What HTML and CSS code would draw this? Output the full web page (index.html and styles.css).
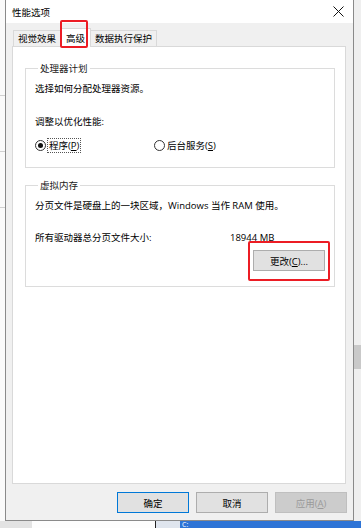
FILE: index.html
```html
<!DOCTYPE html>
<html lang="zh-CN">
<head>
  <meta charset="UTF-8">
  <title>性能选项</title>
  <link rel="stylesheet" href="styles.css">
</head>
<body>

<div class="screen">
  <div class="screen-row">
    <div class="side side-left">
      <span class="side-line"></span>
      <span class="side-line"></span>
      <span class="side-line"></span>
    </div>

    <div class="dialog">
      <div class="titlebar">
        <span class="title">性能选项</span>
        <svg class="close" width="11" height="11" viewBox="0 0 11 11">
          <path d="M0.5 0.5 L10.5 10.5 M10.5 0.5 L0.5 10.5" stroke="#111" stroke-width="1" fill="none"/>
        </svg>
      </div>

      <div class="dialog-body">
        <div class="tabs">
          <div class="tab">视觉效果</div>
          <div class="tab active">高级<span class="mark mark-tab"></span></div>
          <div class="tab">数据执行保护</div>
        </div>

        <div class="panel">
          <fieldset class="group">
            <legend>处理器计划</legend>
            <p class="line first">选择如何分配处理器资源。</p>
            <p class="line gap">调整以优化性能:</p>
            <div class="radio-row">
              <label class="radio">
                <span class="dot checked"></span>
                <span class="focus">程序(<u>P</u>)</span>
              </label>
              <label class="radio radio-second">
                <span class="dot"></span>
                <span>后台服务(<u>S</u>)</span>
              </label>
            </div>
          </fieldset>

          <fieldset class="group group-memory">
            <legend>虚拟内存</legend>
            <p class="line first">分页文件是硬盘上的一块区域，Windows 当作 RAM 使用。</p>
            <div class="line size-row">
              <span class="size-label">所有驱动器总分页文件大小:</span>
              <span>18944 MB</span>
            </div>
            <div class="change-row">
              <button class="btn btn-change">更改(<u>C</u>)...<span class="mark mark-btn"></span></button>
            </div>
          </fieldset>
        </div>

        <div class="buttons">
          <button class="btn default">确定</button>
          <button class="btn">取消</button>
          <button class="btn disabled">应用(<u>A</u>)</button>
        </div>
      </div>
    </div>

    <div class="side side-right">
      <span class="side-block"></span>
    </div>
  </div>

  <div class="screen-bottom">
    <span class="bottom-gray"></span>
    <span class="bottom-white"></span>
    <span class="bottom-edge"></span>
    <span class="bottom-blue">C:</span>
  </div>
</div>

</body>
</html>
```

FILE: styles.css
```css
* { margin: 0; padding: 0; box-sizing: border-box; }

body {
  width: 361px;
  height: 528px;
  overflow: hidden;
  background: #f2f2f2;
  font-family: "Open Sans", "Noto Sans CJK SC", sans-serif;
  font-size: 9.5px;
  color: #000;
}

.screen { display: flex; flex-direction: column; height: 528px; }
.screen-row { display: flex; height: 521px; }

/* background windows peeking out */
.side { flex: none; display: flex; flex-direction: column; }
.side-left { width: 5px; background: #fafafa; padding-top: 95px; gap: 55px; }
.side-line { display: block; height: 1px; background: #d0d0d0; }
.side-right { width: 7px; background: #efefef; padding-top: 345px; }
.side-block { display: block; height: 24px; background: #c9c9c9; }

.screen-bottom { display: flex; height: 7px; }
.bottom-gray { width: 32px; background: #e3e3e3; }
.bottom-white { width: 123px; background: #fdfdfd; }
.bottom-edge { width: 25px; background: #dfe5ee; border-left: 1px solid #222; }
.bottom-blue { flex: 1; background: #2e74d6; color: #fff; font-size: 7px; line-height: 7px; padding-left: 2px; }

/* dialog */
.dialog {
  width: 349px;
  display: flex;
  flex-direction: column;
  border: 1px solid #8a8a8a;
  border-top: none;
  background: #f0f0f0;
}

.titlebar {
  height: 25px;
  background: #fff;
  display: flex;
  align-items: center;
  justify-content: space-between;
  padding: 0 9px 0 6px;
}
.close { display: block; }

.dialog-body { flex: 1; display: flex; flex-direction: column; padding: 0 7px 7px 6px; }

.tabs { display: flex; align-items: flex-end; height: 23px; position: relative; z-index: 1; padding-left: 1px; }
.tab {
  height: 16px;
  line-height: 15px;
  padding: 0 4px;
  border: 1px solid #d9d9d9;
  border-bottom: none;
  background: #f0f0f0;
  margin-right: -1px;
}
.tab.active {
  position: relative;
  height: 19px;
  line-height: 19px;
  background: #fff;
  margin-bottom: -1px;
  padding: 0 5px;
}

.mark {
  position: absolute;
  border: 2px solid #ec1c24;
  border-radius: 2px;
}
.mark-tab { left: -1px; top: -9px; width: 28px; height: 28px; }
.mark-btn { left: -6px; top: -10px; right: -6px; bottom: -11px; }

.panel {
  height: 438px;
  background: #fff;
  border: 1px solid #d9d9d9;
  padding: 15px 10px 0 12px;
}

.group {
  border: 1px solid #dcdcdc;
  padding: 0 9px 15px 9px;
}
.group legend { margin-left: 3px; padding: 0 2px; line-height: 13px; color: #1a1a1a; }
.group-memory { margin-top: 11px; padding-bottom: 15px; }

.line { line-height: 13px; }
.line.first { margin-top: 7px; }
.line.gap { margin-top: 20px; }

.radio-row { display: flex; margin-top: 11px; line-height: 13px; }
.radio { display: flex; align-items: center; gap: 2px; width: 119px; }
.dot {
  width: 11px;
  height: 11px;
  border: 1px solid #333;
  border-radius: 50%;
  display: flex;
  align-items: center;
  justify-content: center;
  background: #fff;
}
.dot.checked::after {
  content: "";
  width: 5px;
  height: 5px;
  border-radius: 50%;
  background: #111;
}
.focus { outline: 1px dotted #555; padding: 0 1px; }

.size-row { display: flex; margin-top: 19px; }
.size-label { width: 195px; }

.change-row { display: flex; justify-content: flex-end; margin-top: 6px; }

.btn {
  position: relative;
  width: 72px;
  height: 21px;
  border: 1px solid #adadad;
  background: #e1e1e1;
  font-family: inherit;
  font-size: 9.5px;
  color: #000;
}
.btn.default { border-color: #0078d7; }
.btn.disabled { background: #cccccc; border-color: #bfbfbf; color: #9a9a9a; }

.buttons { display: flex; justify-content: flex-end; gap: 7px; margin-top: 8px; margin-right: -1px; }
```
